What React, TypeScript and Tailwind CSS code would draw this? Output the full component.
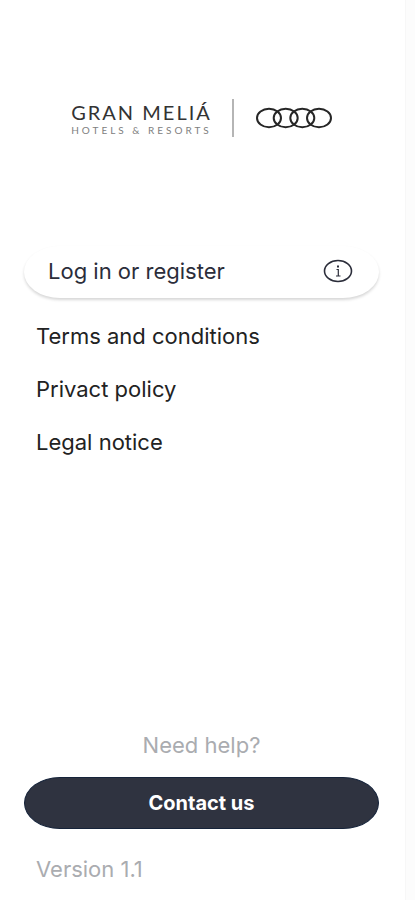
function BrandLogo() {
  return (
    <div className="flex flex-col font-['Lato',sans-serif] whitespace-nowrap">
      <span className="text-xl leading-6 tracking-[2px] text-[#333333]">GRAN MELIÁ</span>
      <span className="text-[10px] leading-3 tracking-[3px] text-[#808080]">HOTELS &amp; RESORTS</span>
    </div>
  );
}

function Rings() {
  return (
    <svg viewBox="0 0 76 24" className="h-6 w-[76px]" fill="none" stroke="#262626" strokeWidth="2" role="img" aria-label="Audi">
      <ellipse cx="13" cy="12" rx="12" ry="9.3" />
      <ellipse cx="29.7" cy="12" rx="12" ry="9.3" />
      <ellipse cx="46.3" cy="12" rx="12" ry="9.3" />
      <ellipse cx="63" cy="12" rx="12" ry="9.3" />
    </svg>
  );
}

function InfoIcon() {
  return (
    <svg viewBox="0 0 30 24" className="h-6 w-[30px]" fill="none" stroke="#2b2d3a" aria-hidden="true">
      <ellipse cx="15" cy="12" rx="13.5" ry="10.5" strokeWidth="1.6" />
      <path d="M13.5 10.5H15.3V17M13 17h4.5" strokeWidth="1.2" />
      <path d="M15 6.5v2" strokeWidth="2" />
    </svg>
  );
}

const links = ["Terms and conditions", "Privact policy", "Legal notice"];

export default function App() {
  return (
    <div className="flex min-h-screen bg-[#fcfcfc] font-['Inter',sans-serif] text-[22px] leading-7">
      <main className="mr-[9px] flex flex-1 flex-col border-r border-[#f7f7f7] bg-white pr-[26px] pl-6">
        <header className="flex items-center justify-center pt-[99px]">
          <BrandLogo />
          <div className="mr-[22px] ml-5 h-[38px] w-[2px] bg-[#b5b5b5]" />
          <Rings />
        </header>

        <button
          type="button"
          className="mt-[109px] flex h-[52px] items-center justify-between rounded-[36px/26px] bg-white pr-[26px] pb-[3px] pl-6 text-[#2b2d3a] shadow-[0_2px_3px_rgba(0,0,0,0.16)]"
        >
          <span>Log in or register</span>
          <InfoIcon />
        </button>

        <nav className="mt-6 flex flex-col items-start gap-[25px] pl-3 text-[#222222]">
          {links.map((label) => (
            <a key={label} href="#">
              {label}
            </a>
          ))}
        </nav>

        <footer className="mt-auto flex flex-col pb-[17px] text-[#aaacb0]">
          <p className="text-center">Need help?</p>
          <button
            type="button"
            className="mt-[18px] h-[52px] rounded-[36px/26px] border border-[#15233a] bg-[#2f3340] text-xl font-bold text-white"
          >
            Contact us
          </button>
          <p className="mt-[26px] pl-3">Version 1.1</p>
        </footer>
      </main>
    </div>
  );
}
